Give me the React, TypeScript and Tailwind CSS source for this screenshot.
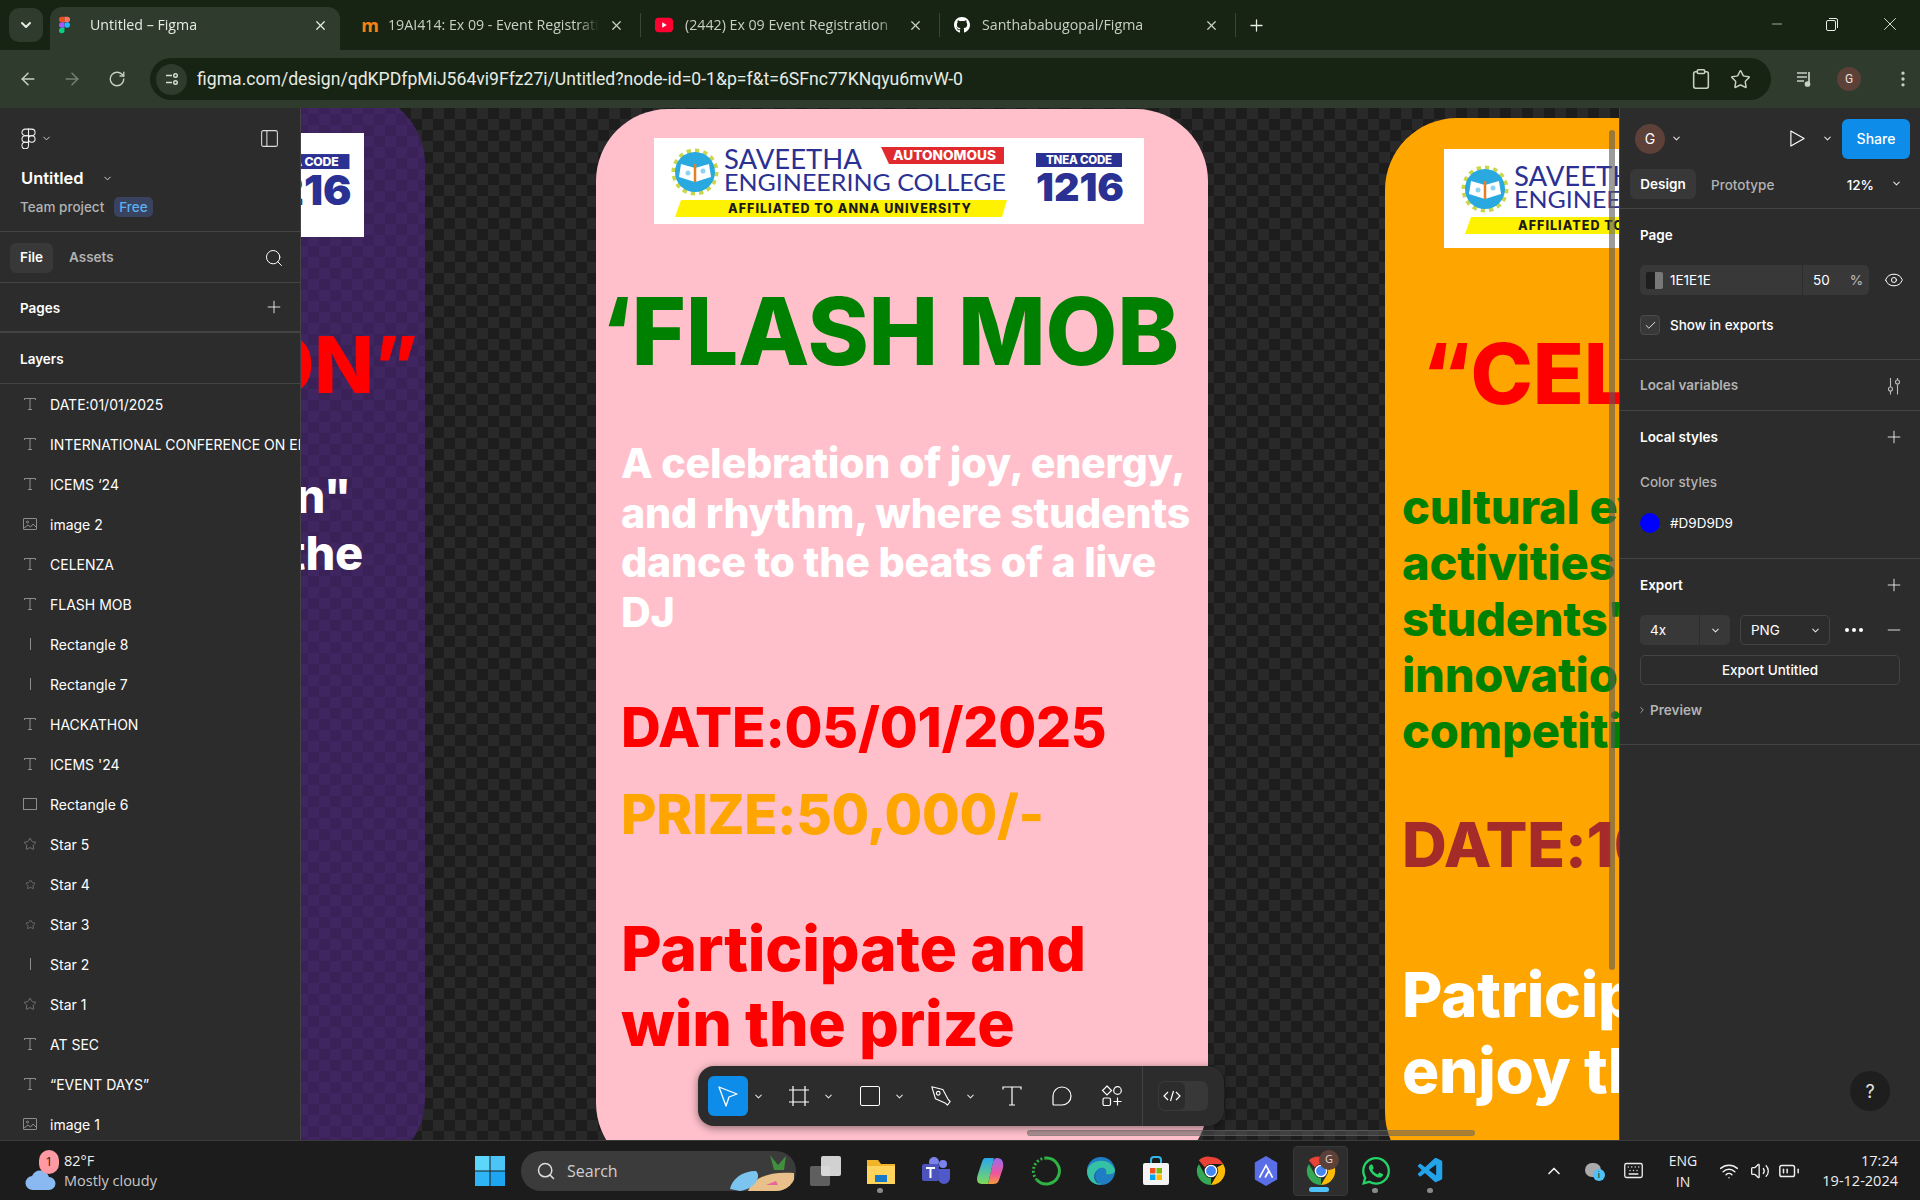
import React from 'react';
import {
  ArrowLeft,
  ArrowRight,
  BatteryMedium,
  Check,
  ChevronDown,
  ChevronRight,
  ChevronUp,
  Clipboard,
  Eye,
  Keyboard,
  Minus,
  MoreVertical,
  PanelLeft,
  Plus,
  RotateCw,
  Search,
  Star,
  Volume2,
  Wifi,
  X,
} from 'lucide-react';
import { FaGithub, FaWhatsapp } from 'react-icons/fa';
import { VscVscode } from 'react-icons/vsc';

const FigmaColor = () => (
  <svg viewBox="0 0 12 18" className="w-[11px] h-[18px]">
    <path d="M0 3a3 3 0 0 1 3-3h3v6H3a3 3 0 0 1-3-3z" fill="#f24e1e" />
    <path d="M6 0h3a3 3 0 0 1 0 6H6z" fill="#ff7262" />
    <path d="M0 9a3 3 0 0 1 3-3h3v6H3a3 3 0 0 1-3-3z" fill="#a259ff" />
    <circle cx="9" cy="9" r="3" fill="#1abcfe" />
    <path d="M0 15a3 3 0 0 1 3-3h3v3a3 3 0 0 1-6 0z" fill="#0acf83" />
  </svg>
);

const FigmaOutline = () => (
  <svg viewBox="0 0 16 22" className="w-[15px] h-[21px]" fill="none" stroke="#f5f5f5" strokeWidth="1.1">
    <path d="M1 4.5A3.5 3.5 0 0 1 4.5 1H8v7H4.5A3.5 3.5 0 0 1 1 4.5z" />
    <path d="M8 1h3.5a3.5 3.5 0 0 1 0 7H8z" />
    <path d="M1 11.500A3.500 3.500 0 0 1 4.500 8H8v7H4.500A3.500 3.500 0 0 1 1 11.500z" />
    <circle cx="11.500" cy="11.500" r="3.500" />
    <path d="M1 18.500A3.500 3.500 0 0 1 4.500 15H8v3.500a3.500 3.500 0 0 1-7 0z" />
  </svg>
);

const tabs = [
  {
    title: 'Untitled – Figma',
    box: 'w-[290px] pl-[6px] pr-[12px] bg-[#2f3b2d] rounded-t-xl text-[#e6ebe3]',
    gap: 'ml-[18px]',
    icon: <FigmaColor />,
    divider: false,
  },
  {
    title: '19AI414: Ex 09 - Event Registration',
    box: 'w-[301px] pl-[22px]',
    gap: 'ml-[10px]',
    icon: <span className="font-bold text-[18px] leading-none text-[#f98012]">m</span>,
    divider: true,
  },
  {
    title: '(2442) Ex 09 Event Registration',
    box: 'w-[299px] pl-[16px]',
    gap: 'ml-[12px]',
    icon: (
      <svg viewBox="0 0 20 20" className="w-5 h-5 -ml-0.5">
        <rect y="2" width="20" height="16" rx="4" fill="#ff0033" />
        <path d="M8 7l5 3-5 3z" fill="#fff" />
      </svg>
    ),
    divider: true,
  },
  {
    title: 'Santhababugopal/Figma',
    box: 'w-[296px] pl-[14px]',
    gap: 'ml-[12px]',
    icon: <FaGithub className="w-5 h-5 text-white" />,
    divider: true,
  },
];

const TabBar = () => (
  <div className="h-[50px] flex items-end pl-[9px] bg-[#172413] text-[#c8d0c4] font-['Open_Sans',sans-serif]">
    <div className="w-[34px] h-[34px] mb-[8px] mr-[7px] rounded-[10px] bg-[#2f3b2d] flex items-center justify-center">
      <ChevronDown size={16} strokeWidth={3} className="text-[#e6ebe3]" />
    </div>
    {tabs.map((t) => (
      <div key={t.title} className={`h-[43px] pb-[7px] flex items-center shrink-0 ${t.box}`}>
        <div className="w-4 flex items-center justify-center shrink-0">{t.icon}</div>
        <span className={`${t.gap} mr-[10px] flex-1 overflow-hidden whitespace-nowrap text-[14.200px] [mask-image:linear-gradient(90deg,#000_90%,transparent)]`}>
          {t.title}
        </span>
        <X size={15} strokeWidth={2} className="shrink-0" />
        {t.divider && <i className="ml-[16px] w-px h-6 bg-[#3b463a]" />}
      </div>
    ))}
    <Plus size={19} strokeWidth={1.6} className="ml-[11px] mb-[15px] text-[#e6ebe3]" />
    <div className="ml-auto h-[50px] flex items-center text-[#e6ebe3] pr-[19px] gap-[39px] pb-[2px]">
      <Minus size={16} strokeWidth={1} />
      <svg viewBox="0 0 16 16" className="w-4 h-4" fill="none" stroke="currentColor">
        <rect x="2.500" y="4.500" width="9" height="10" rx="1.500" />
        <path d="M5 2.500h7a1.500 1.500 0 0 1 1.500 1.500v8" />
      </svg>
      <X size={22} strokeWidth={1} />
    </div>
  </div>
);

const ToolBar = () => (
  <div className="h-[58px] bg-[#2f3b2d] flex items-center pl-[18px] text-[#c8d0c4] font-['Roboto',sans-serif]">
    <ArrowLeft size={20} strokeWidth={1.8} />
    <ArrowRight size={20} strokeWidth={1.8} className="ml-[24px] text-[#76816f]" />
    <RotateCw size={18} strokeWidth={1.8} className="ml-[26px]" />
    <div className="ml-[24px] w-[1621px] h-[42px] rounded-full bg-[#172413] flex items-center pl-[6px] pr-[20px] shrink-0">
      <div className="w-[31px] h-[31px] rounded-full bg-[#2f3b2d] flex items-center justify-center">
        <svg viewBox="0 0 16 16" className="w-4 h-4" fill="none" stroke="#d7ddd3" strokeWidth="1.400">
          <path d="M2 4.500h6M2 11.500h6" />
          <circle cx="11.500" cy="4.500" r="1.800" />
          <circle cx="11.500" cy="11.500" r="1.800" />
        </svg>
      </div>
      <span className="ml-[10px] text-[17.600px] text-[#e6ebe3] whitespace-nowrap">
        figma.com/design/qdKPDfpMiJ564vi9Ffz27i/Untitled?node-id=0-1&amp;p=f&amp;t=6SFnc77KNqyu6mvW-0
      </span>
      <Clipboard size={22} strokeWidth={1.700} className="ml-auto" />
      <Star size={21} strokeWidth={1.700} className="ml-[18px]" />
    </div>
    <svg viewBox="0 0 20 20" className="ml-[24px] w-5 h-5" fill="none" stroke="#c8d0c4" strokeWidth="1.700">
      <path d="M2 4h10M2 8h10M2 12h7" />
      <path d="M14 3v11" />
      <circle cx="12.500" cy="15" r="2" fill="#c8d0c4" />
    </svg>
    <div className="ml-[22px] w-6 h-6 rounded-full bg-[#5d4037] flex items-center justify-center text-[12px] text-[#e8e0dc]">G</div>
    <MoreVertical size={20} strokeWidth={2} className="ml-[32px]" />
  </div>
);

const TextIcon = () => (
  <svg viewBox="0 0 14 14" className="w-[14px] h-[14px]" fill="none" stroke="#8c8c8c" strokeWidth="1">
    <path d="M1.500 3V1.500h11V3M7 1.500v11M5 12.500h4" />
  </svg>
);

const layerIcons: Record<string, React.ReactNode> = {
  t: <TextIcon />,
  img: (
    <svg viewBox="0 0 14 14" className="w-[14px] h-[14px]" fill="none" stroke="#8c8c8c">
      <rect x="0.500" y="1.500" width="13" height="11" rx="0.500" />
      <path d="M1 11l4-3 2.500 2L10 7l3 3" />
      <circle cx="4.500" cy="5" r="1" />
    </svg>
  ),
  bar: <div className="w-px h-[12px] bg-[#8c8c8c]" />,
  rect: <div className="w-[14px] h-[12px] border border-[#8c8c8c]" />,
  star: <Star size={14} strokeWidth={1.200} className="text-[#8c8c8c]" />,
  small: <Star size={11} strokeWidth={1.300} className="text-[#8c8c8c]" />,
};

const layers = [
  ['t', 'DATE:01/01/2025'],
  ['t', 'INTERNATIONAL CONFERENCE ON EMERGING'],
  ['t', 'ICEMS ‘24'],
  ['img', 'image 2'],
  ['t', 'CELENZA'],
  ['t', 'FLASH MOB'],
  ['bar', 'Rectangle 8'],
  ['bar', 'Rectangle 7'],
  ['t', 'HACKATHON'],
  ['t', "ICEMS '24"],
  ['rect', 'Rectangle 6'],
  ['star', 'Star 5'],
  ['small', 'Star 4'],
  ['small', 'Star 3'],
  ['bar', 'Star 2'],
  ['star', 'Star 1'],
  ['t', 'AT SEC'],
  ['t', '“EVENT DAYS”'],
  ['img', 'image 1'],
];

const LeftPanel = () => (
  <aside className="w-[301px] shrink-0 bg-[#2c2c2c] border-r border-[#444] overflow-hidden text-white z-10">
    <div className="h-[124px] border-b border-[#444] pl-[21px] pr-[20px] pt-[20px]">
      <div className="flex items-center">
        <FigmaOutline />
        <ChevronDown size={11} className="ml-[5px] text-[#ddd]" />
        <PanelLeft size={21} strokeWidth={1.200} className="ml-auto text-[#ddd]" />
      </div>
      <div className="mt-[19px] flex items-center">
        <span className="text-[16.500px] font-semibold leading-5">Untitled</span>
        <ChevronDown size={11} className="ml-[18px] text-[#ddd]" />
      </div>
      <div className="mt-[9px] -ml-px flex items-center text-[13.500px] text-[#b3b3b3] font-medium">
        Team project
        <span className="ml-[10px] px-[5px] h-5 leading-5 rounded-[5px] bg-[#394360] text-[#5cb0f0]">Free</span>
      </div>
    </div>
    <div className="h-[51px] border-b border-[#444] flex items-center pl-[10px] pr-[16px] pt-px text-[13.500px] font-semibold">
      <span className="h-[30px] w-[43px] rounded-[6px] bg-[#383838] flex items-center justify-center">File</span>
      <span className="ml-[16px] text-[#b3b3b3]">Assets</span>
      <Search size={20} strokeWidth={1.200} className="ml-auto" />
    </div>
    <div className="h-[50px] border-b-2 border-[#444] flex items-center pl-[20px] pr-[16px] pt-[3px] text-[13.500px] font-semibold">
      Pages
      <Plus size={20} strokeWidth={1} className="ml-auto -mt-[3px]" />
    </div>
    <div className="h-[51px] border-b border-[#444] flex items-center pl-[20px] pt-[2px] text-[13.500px] font-semibold">Layers</div>
    {layers.map(([icon, name], i) => (
      <div key={i} className="h-10 flex items-center pl-[22px]">
        <div className="w-4 flex justify-center shrink-0">{layerIcons[icon]}</div>
        <span className="ml-3 text-[14px] whitespace-nowrap">{name}</span>
      </div>
    ))}
  </aside>
);

const Gear = () => (
  <g>
    <circle cx="41" cy="34" r="20" fill="none" stroke="#c9d64a" strokeWidth="7" strokeDasharray="4 3.800" />
    <circle cx="41" cy="34" r="20" fill="#29a9e0" />
    <path d="M27 26l14 4 14-4 2 13-16 5-16-5z" fill="#fff" />
    <path d="M41 26v18" stroke="#e67e22" strokeWidth="2.500" />
    <circle cx="34" cy="35" r="2.500" fill="#8fd3f0" />
    <circle cx="49" cy="33" r="2.500" fill="#8fd3f0" />
  </g>
);

const Logo = ({ className }: { className: string }) => (
  <svg viewBox="0 0 490 86" className={`shrink-0 tracking-normal ${className}`} fontFamily="Lato, sans-serif" fontWeight="400">
    <rect width="490" height="86" fill="#fff" />
    <Gear />
    <text x="70" y="31" fontSize="26" fill="#2a3192" textLength="138" lengthAdjust="spacingAndGlyphs">SAVEETHA</text>
    <text x="70" y="53" fontSize="23" fill="#2a3192" textLength="282" lengthAdjust="spacingAndGlyphs">ENGINEERING COLLEGE</text>
    <path d="M227 9h123v17H235z" fill="#e02a2f" />
    <text x="239" y="22" fontSize="13" fontWeight="800" fontFamily="Inter, sans-serif" fill="#fff" textLength="103" lengthAdjust="spacingAndGlyphs">AUTONOMOUS</text>
    <path d="M27 62h326l-5 17H21z" fill="#fff200" />
    <text x="74" y="75" fontSize="12.500" fontWeight="800" fontFamily="Inter, sans-serif" fill="#1a1a1a" textLength="243" lengthAdjust="spacing">AFFILIATED TO ANNA UNIVERSITY</text>
    <rect x="382" y="15" width="86" height="14" fill="#2a3192" />
    <text x="392" y="26" fontSize="11.500" fontWeight="800" fontFamily="Inter, sans-serif" fill="#fff" textLength="66" lengthAdjust="spacing">TNEA CODE</text>
    <text x="382" y="63" fontSize="38" fontWeight="900" fontFamily="Inter, sans-serif" fill="#2a3192" textLength="88" lengthAdjust="spacingAndGlyphs">1216</text>
  </svg>
);

const PurpleCard = () => (
  <div className="absolute left-[-400px] top-[-16px] w-[524px] h-[1079px] rounded-[72px] bg-[#3a2258] bg-[repeating-conic-gradient(#3a2258_0%_25%,#3f2660_0%_50%)] bg-size-[22px_22px] flex flex-col items-end whitespace-nowrap font-extrabold tracking-[-0.015em]">
    <div className="mt-[41px] mr-[61px] w-[130px] h-[104px] bg-white overflow-hidden flex justify-end pt-[5px]">
      <Logo className="w-[524px] -mr-[9px] h-[92px]" />
    </div>
    <div className="mt-[78px] mr-[7px] text-[78px] leading-[100px] text-[#ff0000]">“HACKATHON”</div>
    <div className="mt-[52px] mr-[74px] text-[47px] leading-[57px] text-white">on"</div>
    <div className="mr-[62px] text-[47px] leading-[57px] text-white">the</div>
  </div>
);

const PinkCard = () => (
  <div className="absolute left-[295px] top-px w-[612px] h-[1066px] rounded-[72px] bg-[#ffc0cb] flex flex-col pl-[25px] whitespace-nowrap font-extrabold tracking-[-0.015em]">
    <Logo className="w-[490px] h-[86px] mt-[29px] ml-[33px]" />
    <div className="mt-[57px] -ml-[20px] text-[93px] leading-[100px] text-[#008000]">‘FLASH MOB</div>
    <div className="mt-[58px] text-[41.200px] leading-[49.500px] text-white">
      A celebration of joy, energy,
      <br />
      and rhythm, where students
      <br />
      dance to the beats of a live
      <br />
      DJ
    </div>
    <div className="mt-[55px] text-[55px] leading-[70px] text-[#ff0000]">DATE:05/01/2025</div>
    <div className="mt-[17px] text-[54.500px] leading-[70px] text-[#ffa500]">PRIZE:50,000/-</div>
    <div className="mt-[62px] text-[62.500px] leading-[75px] text-[#ff0000]">
      Participate and
      <br />
      win the prize
    </div>
  </div>
);

const OrangeCard = () => (
  <div className="absolute left-[1084px] top-[10px] w-[612px] h-[1066px] rounded-[72px] bg-[#ffa500] flex flex-col pl-[17px] whitespace-nowrap font-extrabold tracking-[-0.015em]">
    <div className="mt-[31px] ml-[42px] w-[563px] h-[99px] bg-white pt-[6px]">
      <Logo className="w-[490px] h-[86px]" />
    </div>
    <div className="mt-[76px] ml-[20px] text-[84px] leading-[100px] text-[#ff0000]">“CELENZA”</div>
    <div className="mt-[55px] text-[47px] leading-[56px] text-[#008000]">
      cultural events
      <br />
      activities
      <br />
      students' talent
      <br />
      innovation
      <br />
      competitions
    </div>
    <div className="mt-[51px] text-[62px] leading-[70px] text-[#a52a2a]">DATE:10/01/2025</div>
    <div className="mt-[77px] text-[62px] leading-[76px] text-white">
      Patricipate and
      <br />
      enjoy the event
    </div>
  </div>
);

const Chev = () => <ChevronDown size={11} strokeWidth={2.200} className="text-[#e5e5e5]" />;

const ToolButton = ({ children, chev }: { children: React.ReactNode; chev?: boolean }) => (
  <div className={`flex items-center ${chev ? 'w-[71px]' : 'w-[50px]'}`}>
    <div className="w-10 flex justify-center shrink-0">{children}</div>
    {chev && (
      <div className="ml-[4px]">
        <Chev />
      </div>
    )}
  </div>
);

const BottomToolbar = () => (
  <div className="absolute left-[397px] top-[958px] w-[526px] h-[60px] rounded-2xl bg-[#2c2c2c] shadow-[0_2px_8px_rgba(0,0,0,0.45)] flex items-center pl-[10px] text-white">
    <div className="w-[71px] flex items-center">
      <div className="w-10 h-10 rounded-[6px] bg-[#0d8ce9] flex items-center justify-center">
        <svg viewBox="0 0 24 24" className="w-6 h-6" fill="none" stroke="#fff" strokeWidth="1.300" strokeLinejoin="round">
          <path d="M3 3l18 7-8 3-3 9z" />
        </svg>
      </div>
      <div className="ml-[5px]"><Chev /></div>
    </div>
    <ToolButton chev>
      <svg viewBox="0 0 22 22" className="w-[22px] h-[22px]" fill="none" stroke="#fff" strokeWidth="1.200">
        <path d="M5 1v20M17 1v20M1 5h20M1 17h20" />
      </svg>
    </ToolButton>
    <ToolButton chev>
      <div className="w-5 h-5 rounded-[2px] border-[1.300px] border-white" />
    </ToolButton>
    <ToolButton chev>
      <svg viewBox="0 0 24 24" className="w-[22px] h-[22px]" fill="none" stroke="#fff" strokeWidth="1.200" strokeLinejoin="round">
        <path d="M2 2l12 3 6 11 2 2-3 4-2-2-11-5z" />
        <circle cx="9" cy="9" r="2" />
      </svg>
    </ToolButton>
    <ToolButton>
      <svg viewBox="0 0 20 20" className="w-5 h-5" fill="none" stroke="#fff" strokeWidth="1.200">
        <path d="M1 3.500V1h18v2.500M10 1v18M7 19h6" />
      </svg>
    </ToolButton>
    <ToolButton>
      <svg viewBox="0 0 20 20" className="w-5 h-5" fill="none" stroke="#fff" strokeWidth="1.200">
        <path d="M10 1a9 9 0 0 1 0 18H2a1 1 0 0 1-1-1v-8a9 9 0 0 1 9-9z" />
      </svg>
    </ToolButton>
    <ToolButton>
      <svg viewBox="0 0 22 22" className="w-[22px] h-[22px]" fill="none" stroke="#fff" strokeWidth="1.200">
        <path d="M6 1l4.500 4.500L6 10 1.500 5.500z" />
        <circle cx="16.500" cy="5.500" r="3.800" />
        <rect x="2" y="13" width="7.500" height="7.500" rx="1.500" />
        <path d="M16.500 12.500v8M12.500 16.500h8" />
      </svg>
    </ToolButton>
    <div className="w-px h-[60px] bg-[#444]" />
    <div className="ml-[15px] w-[50px] h-[30px] rounded-[7px] bg-[#383838] flex">
      <div className="w-[28px] h-[30px] rounded-[7px] bg-[#2c2c2c] border border-[#3a3a3a] flex items-center justify-center">
        <svg viewBox="0 0 20 20" className="w-5 h-5" fill="none" stroke="#fff" strokeWidth="1.200">
          <path d="M6 6l-4 4 4 4M14 6l4 4-4 4M11.500 5l-3 10" />
        </svg>
      </div>
    </div>
  </div>
);

const Canvas = () => (
  <main className="relative flex-1 overflow-hidden bg-[#1e1e1e] bg-[repeating-conic-gradient(#1d1d1d_0%_25%,#292929_0%_50%)] bg-size-[22px_22px]">
    <PurpleCard />
    <PinkCard />
    <OrangeCard />
    <div className="absolute left-[1308px] top-[22px] w-[6px] h-[840px] rounded-full bg-[#5a5a5a]/60" />
    <div className="absolute left-[726px] top-[1022px] w-[448px] h-[6px] rounded-full bg-[#5a5a5a]/50 border border-[#777]/40" />
    <BottomToolbar />
  </main>
);

const Section = ({ className, children }: { className: string; children: React.ReactNode }) => (
  <div className={`border-b border-[#444] pl-[20px] pr-[16px] ${className}`}>{children}</div>
);

const RightPanel = () => (
  <aside className="absolute right-0 top-0 bottom-0 w-[301px] bg-[#2c2c2c] border-l border-[#444] text-white text-[13.500px] font-medium overflow-hidden">
    <div className="h-[61px] flex items-center pl-[15px] pr-[10px]">
      <div className="w-[30px] h-[30px] rounded-full bg-[#5d4037] flex items-center justify-center text-[14px] font-normal">G</div>
      <div className="ml-[6px]"><Chev /></div>
      <svg viewBox="0 0 18 20" className="ml-auto w-[17px] h-[19px]" fill="none" stroke="#fff" strokeWidth="1.200" strokeLinejoin="round">
        <path d="M2 2l14 8-14 8z" />
      </svg>
      <div className="ml-[16px]"><Chev /></div>
      <div className="ml-[9px] w-[68px] h-[40px] rounded-[6px] bg-[#0d8ce9] flex items-center justify-center text-[14px]">Share</div>
    </div>
    <Section className="h-[40px] !pl-[10px] flex items-start">
      <span className="h-[30px] w-[66px] rounded-[6px] bg-[#383838] flex items-center justify-center font-semibold">Design</span>
      <span className="ml-[15px] mt-[6px] text-[#b3b3b3]">Prototype</span>
      <span className="ml-auto mt-[6px]">12%</span>
      <div className="ml-[17px] mt-[9px] mr-[2px]"><Chev /></div>
    </Section>
    <Section className="h-[151px] pt-[16px]">
      <div className="font-semibold leading-5">Page</div>
      <div className="mt-[20px] flex items-center">
        <div className="w-[230px] h-[30px] rounded-[5px] bg-[#383838] flex items-center pl-[6px]">
          <div className="w-[17px] h-[17px] rounded-[2px] flex overflow-hidden">
            <div className="w-1/2 bg-[#1e1e1e]" />
            <div className="w-1/2 bg-[#777]" />
          </div>
          <span className="ml-[7px] font-normal w-[132px]">1E1E1E</span>
          <div className="w-px h-[30px] bg-[#2c2c2c]" />
          <span className="ml-[10px] font-normal">50</span>
          <span className="ml-[20px] text-[#b3b3b3]">%</span>
        </div>
        <Eye size={20} strokeWidth={1.200} className="ml-[15px]" />
      </div>
      <div className="mt-[20px] flex items-center">
        <div className="w-5 h-5 rounded-[4px] border border-[#4a4a4a] bg-[#383838] flex items-center justify-center">
          <Check size={13} strokeWidth={1.500} />
        </div>
        <span className="ml-[10px]">Show in exports</span>
      </div>
    </Section>
    <Section className="h-[51px] pt-px flex items-center text-[#b3b3b3] font-semibold">
      Local variables
      <svg viewBox="0 0 16 18" className="ml-auto mr-[2px] w-4 h-[18px]" fill="none" stroke="#bbb" strokeWidth="1.100">
        <path d="M4.500 1v9M4.500 14v3.500M11.500 1v2M11.500 7.500v10" />
        <circle cx="4.500" cy="12" r="2" />
        <circle cx="11.500" cy="5" r="2" />
      </svg>
    </Section>
    <Section className="h-[148px] pt-[16px]">
      <div className="flex items-center justify-between font-semibold leading-5">
        Local styles
        <Plus size={20} strokeWidth={1} />
      </div>
      <div className="mt-[25px] text-[#b3b3b3] leading-5">Color styles</div>
      <div className="mt-[21px] flex items-center font-normal">
        <div className="w-5 h-5 rounded-full bg-[#0000ff]" />
        <span className="ml-[10px]">#D9D9D9</span>
      </div>
    </Section>
    <Section className="h-[186px] pt-[16px] !pr-[10px]">
      <div className="flex items-center justify-between font-semibold leading-5 pr-[6px]">
        Export
        <Plus size={20} strokeWidth={1} />
      </div>
      <div className="mt-[20px] flex items-center font-normal">
        <div className="w-[90px] h-[30px] rounded-[5px] bg-[#383838] flex items-center pl-[10px]">
          <span className="w-[49px]">4x</span>
          <div className="w-px h-[30px] bg-[#2c2c2c]" />
          <div className="ml-[10px]"><Chev /></div>
        </div>
        <div className="ml-[10px] w-[90px] h-[30px] rounded-[5px] border border-[#444] flex items-center pl-[10px]">
          <span className="w-[59px]">PNG</span>
          <Chev />
        </div>
        <div className="ml-[15px] flex gap-[3px]">
          <i className="w-[4px] h-[4px] rounded-full bg-white" />
          <i className="w-[4px] h-[4px] rounded-full bg-white" />
          <i className="w-[4px] h-[4px] rounded-full bg-white" />
        </div>
        <Minus size={20} strokeWidth={1} className="ml-[21px]" />
      </div>
      <div className="mt-[10px] w-[260px] h-[30px] rounded-[5px] border border-[#444] flex items-center justify-center">Export Untitled</div>
      <div className="mt-[15px] -ml-[3px] flex items-center text-[#b3b3b3] font-semibold leading-5">
        <ChevronRight size={10} strokeWidth={2} />
        <span className="ml-[3px]">Preview</span>
      </div>
    </Section>
    <div className="absolute right-[30px] top-[963px] w-10 h-10 rounded-full bg-[#1e1e1e] flex items-center justify-center text-[18px] font-normal text-[#e5e5e5]">?</div>
  </aside>
);

const ChromeIcon = ({ className }: { className: string }) => (
  <svg viewBox="0 0 32 32" className={className}>
    <path d="M16 1a15 15 0 0 1 13 7.500H16a7.500 7.500 0 0 0-6.500 3.750L3 4.500A15 15 0 0 1 16 1z" fill="#ea4335" />
    <path d="M29 8.500A15 15 0 0 1 16 31l6.500-11.250A7.500 7.500 0 0 0 22.500 12z" fill="#fbbc04" />
    <path d="M16 31A15 15 0 0 1 3 8.500l6.500 11.250A7.500 7.500 0 0 0 16 23.500z" fill="#34a853" />
    <circle cx="16" cy="16" r="6" fill="#4285f4" stroke="#fff" strokeWidth="1.500" />
  </svg>
);

const Dot = ({ active }: { active?: boolean }) =>
  active ? (
    <i className="absolute bottom-[3px] left-[15px] w-5 h-[5px] rounded-full bg-[#4fc3f7]" />
  ) : (
    <i className="absolute bottom-[3px] left-[24px] w-[6px] h-[5px] rounded-full bg-[#8a8a8a]" />
  );

const TaskIcon = ({ children, dot, active }: { children: React.ReactNode; dot?: boolean; active?: boolean }) => (
  <div className={`relative w-[55px] h-[50px] flex items-center justify-center rounded-[4px] ${active ? 'bg-[#2d2d2d] border border-[#383838]' : ''}`}>
    {children}
    {dot && <Dot active={active} />}
  </div>
);

const Taskbar = () => (
  <footer className="h-[60px] bg-[#1c1c1c] border-t border-[#3a3a3a] flex items-center text-[#eee] font-['Open_Sans',sans-serif] z-20 relative">
    <div className="w-[475px] shrink-0 flex items-center pl-[25px]">
      <div className="relative w-[32px] h-[40px]">
        <svg viewBox="0 0 32 24" className="absolute left-0 bottom-0 w-[32px] h-[24px]">
          <path d="M8 23a7 7 0 0 1-1-14 9 9 0 0 1 17 1 6.500 6.500 0 0 1 0 13z" fill="#8ab8f0" />
        </svg>
        <div className="absolute left-[14px] -top-[1px] w-5 h-6 rounded-full bg-[#ff9aa2] flex items-center justify-center text-[13px] text-[#222]">1</div>
      </div>
      <div className="ml-[7px] text-[14.500px] leading-[20px] whitespace-nowrap">
        <div>82°F</div>
        <div className="text-[#c8c8c8]">Mostly cloudy</div>
      </div>
    </div>
    <svg viewBox="0 0 30 30" className="w-[30px] h-[30px] shrink-0">
      <rect width="14.500" height="14.500" fill="#5cd6fb" />
      <rect x="15.500" width="14.500" height="14.500" fill="#4cc4f8" />
      <rect y="15.500" width="14.500" height="14.500" fill="#2fb4f5" />
      <rect x="15.500" y="15.500" width="14.500" height="14.500" fill="#1ea5f2" />
    </svg>
    <div className="ml-[16px] w-[275px] h-10 rounded-full bg-[#3b3b3b] flex items-center pl-[15px] shrink-0 relative overflow-hidden">
      <Search size={20} strokeWidth={1.800} className="text-[#ddd]" />
      <span className="ml-[11px] text-[16px] text-[#cfcfcf]">Search</span>
      <svg viewBox="0 0 68 40" className="ml-auto w-[68px] h-10">
        <path d="M20 40c6-14 22-20 46-18v18z" fill="#e9c08a" />
        <path d="M2 38c2-10 12-18 26-18 6 6-2 18-16 20z" fill="#7cc4f0" />
        <path d="M42 4l8 10 8-9-2 14H46z" fill="#3f8f3c" />
        <path d="M38 34l10-4 2 4z" fill="#e8669c" />
      </svg>
    </div>
    <div className="ml-[2px] flex items-center">
      <TaskIcon>
        <div className="relative w-[31px] h-[30px]">
          <div className="absolute left-0 bottom-0 w-5 h-5 rounded-[2px] bg-[#5f5f5f]" />
          <div className="absolute right-0 top-0 w-5 h-5 rounded-[2px] bg-[#e6e6e6]/90" />
        </div>
      </TaskIcon>
      <TaskIcon dot>
        <svg viewBox="0 0 30 30" className="w-[30px] h-[30px]">
          <path d="M1 4h11l3 4h14v20H1z" fill="#f0b429" />
          <path d="M1 10h28v18H1z" fill="#ffd35c" />
          <rect x="9" y="19" width="12" height="7" fill="#1678c8" />
        </svg>
      </TaskIcon>
      <TaskIcon>
        <svg viewBox="0 0 30 30" className="w-[30px] h-[30px]">
          <circle cx="22" cy="8" r="4" fill="#7b83eb" />
          <path d="M16 13h13v9a6 6 0 0 1-12 0z" fill="#5059c9" />
          <circle cx="13" cy="6" r="5" fill="#7b83eb" />
          <rect x="1" y="8" width="17" height="17" rx="2" fill="#4b53bc" />
          <path d="M5 12h9M9.500 12v10" stroke="#fff" strokeWidth="2" />
        </svg>
      </TaskIcon>
      <TaskIcon>
        <svg viewBox="0 0 30 30" className="w-[30px] h-[30px]">
          <defs>
            <linearGradient id="copA" x1="0" y1="0" x2="0" y2="1">
              <stop offset="0" stopColor="#2aa7f0" />
              <stop offset="1" stopColor="#7ed957" />
            </linearGradient>
            <linearGradient id="copB" x1="0" y1="0" x2="0" y2="1">
              <stop offset="0" stopColor="#9a6cf0" />
              <stop offset="0.600" stopColor="#f0569b" />
              <stop offset="1" stopColor="#f59a3c" />
            </linearGradient>
          </defs>
          <path d="M21 2c5 0 7 4 6 10l-4 12c-1 3-3 4-6 4h-5l5-22c1-3 2-4 4-4z" fill="url(#copB)" />
          <path d="M9 2h9l-6 26H6C1 28 0 24 2 18L6 6c1-3 2-4 3-4z" fill="url(#copA)" />
        </svg>
      </TaskIcon>
      <TaskIcon>
        <svg viewBox="0 0 30 30" className="w-[30px] h-[30px]" fill="none" stroke="#2fb344" strokeWidth="3">
          <path d="M15 2a13 13 0 1 1-9 22" />
          <path d="M6 24A13 13 0 0 1 15 2" strokeDasharray="2 2" />
        </svg>
      </TaskIcon>
      <TaskIcon>
        <svg viewBox="0 0 30 30" className="w-[30px] h-[30px]">
          <circle cx="15" cy="15" r="14" fill="#1f7dc4" />
          <path d="M1 15C3 3 24 0 29 14c0 4-5 5-9 4 2-5-3-8-8-5-5 4-3 12 4 15C8 30 1 24 1 15z" fill="#35c1a3" />
          <path d="M16 28c-6-2-9-9-4-14-4 2-6 8-1 13z" fill="#1f5fa8" />
        </svg>
      </TaskIcon>
      <TaskIcon>
        <svg viewBox="0 0 30 30" className="w-[30px] h-[30px]">
          <path d="M10 8V4a3 3 0 0 1 3-3h4a3 3 0 0 1 3 3v4" fill="none" stroke="#35b7e8" strokeWidth="2" />
          <rect x="2" y="7" width="26" height="22" rx="2" fill="#f4f4f4" />
          <rect x="9" y="12" width="5.500" height="5.500" fill="#f25022" />
          <rect x="15.500" y="12" width="5.500" height="5.500" fill="#7fba00" />
          <rect x="9" y="18.500" width="5.500" height="5.500" fill="#00a4ef" />
          <rect x="15.500" y="18.500" width="5.500" height="5.500" fill="#ffb900" />
        </svg>
      </TaskIcon>
      <TaskIcon>
        <ChromeIcon className="w-[30px] h-[30px]" />
      </TaskIcon>
      <TaskIcon>
        <svg viewBox="0 0 30 34" className="w-[28px] h-[32px]">
          <path d="M15 1l12 7v18l-12 7-12-7V8z" fill="#5a6ee8" />
          <path d="M8 24l7-13 7 13M14 24l4-7" fill="none" stroke="#fff" strokeWidth="1.800" />
        </svg>
      </TaskIcon>
      <TaskIcon dot active>
        <ChromeIcon className="w-[30px] h-[30px]" />
        <div className="absolute right-[8px] top-[3px] w-5 h-5 rounded-full bg-[#5d4037] text-[11px] flex items-center justify-center text-[#ddd]">G</div>
      </TaskIcon>
      <TaskIcon dot>
        <FaWhatsapp className="w-[32px] h-[32px] text-[#25d366]" />
      </TaskIcon>
      <TaskIcon dot>
        <VscVscode className="w-[30px] h-[30px] text-[#23a3ea]" />
      </TaskIcon>
    </div>
    <div className="ml-auto flex items-center pr-[22px]">
      <ChevronUp size={20} strokeWidth={2} />
      <div className="relative ml-[21px] w-5 h-5">
        <div className="absolute left-0 top-[2px] w-4 h-[14px] rounded-full bg-[#aaa]" />
        <div className="absolute right-0 bottom-0 w-[12px] h-[12px] rounded-full bg-[#4fc3f7] text-[9px] leading-[12px] text-center text-black">i</div>
      </div>
      <Keyboard size={21} strokeWidth={1.500} className="ml-[18px]" />
      <div className="ml-[24px] w-[30px] text-center text-[14px] leading-[21px]">
        <div>ENG</div>
        <div>IN</div>
      </div>
      <Wifi size={20} strokeWidth={1.800} className="ml-[21px]" />
      <Volume2 size={20} strokeWidth={1.600} className="ml-[11px]" />
      <BatteryMedium size={22} strokeWidth={1.600} className="ml-[8px]" />
      <div className="ml-[20px] w-[78px] text-right text-[14.500px] leading-[20px] whitespace-nowrap">
        <div>17:24</div>
        <div>19-12-2024</div>
      </div>
    </div>
  </footer>
);

const App = () => {
  return (
    <div className="w-[1920px] h-[1200px] overflow-hidden flex flex-col font-['Inter',sans-serif] bg-[#1e1e1e]">
      <TabBar />
      <ToolBar />
      <div className="relative flex-1 flex min-h-0">
        <LeftPanel />
        <Canvas />
        <RightPanel />
      </div>
      <Taskbar />
    </div>
  );
};

export default App;
